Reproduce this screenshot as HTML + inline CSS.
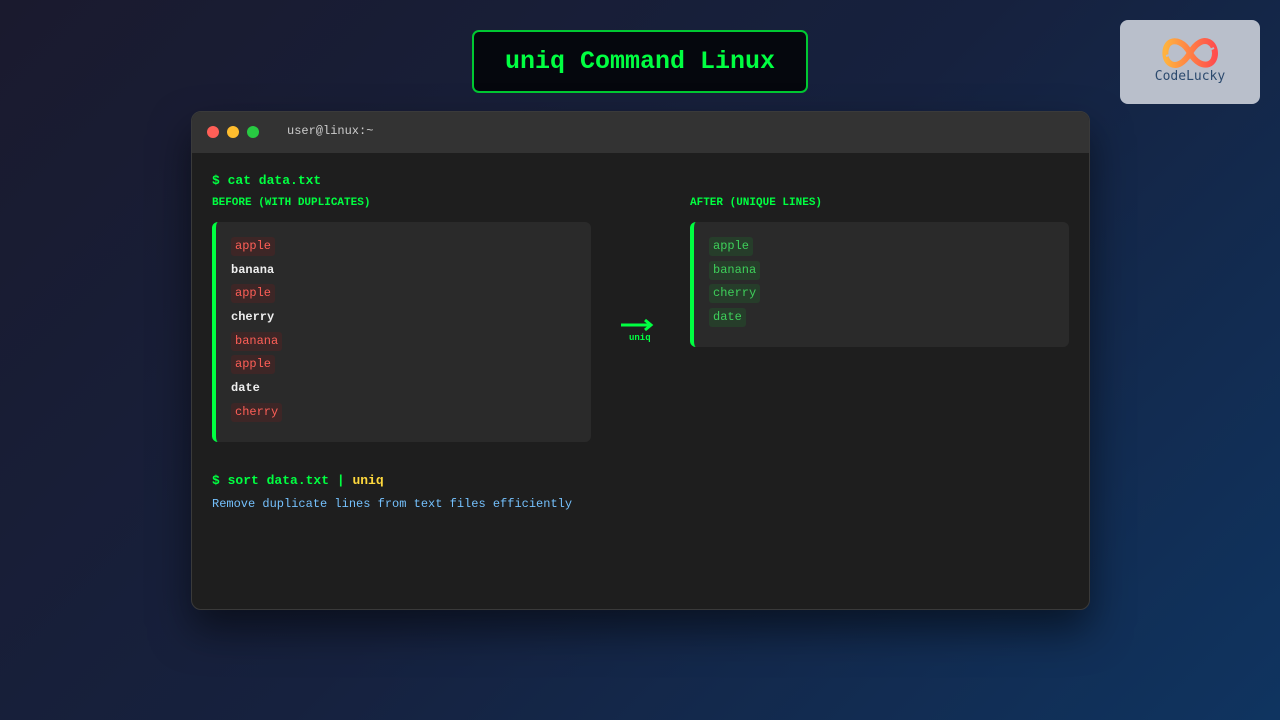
<!DOCTYPE html>
<html><head><style>
*{margin:0;padding:0;box-sizing:border-box}
body{width:1280px;height:720px;overflow:hidden;background:linear-gradient(135deg,#1a1a2e 0%,#16213e 50%,#0f3460 100%);font-family:"Courier New",Courier,"Nimbus Mono PS","Liberation Mono",monospace;position:relative}
.title{position:absolute;left:472px;top:30px;width:336px;height:63px;border:2px solid #00c832;border-radius:7px;background:#05070d;color:#00ff41;font-weight:bold;font-size:25px;display:flex;align-items:center;justify-content:center}
.logo{position:absolute;left:1120px;top:20px;width:140px;height:84px;border-radius:8px;background:#b9bfcb;text-align:center}
.logo .t{position:absolute;top:49px;width:100%;font-family:"DejaVu Sans Mono",monospace;font-size:13px;color:#2c4a6e}
.term{position:absolute;left:191px;top:111px;width:899px;height:499px;background:#1e1e1e;border-radius:10px;border:1px solid #3a3a3a;box-shadow:0 20px 40px rgba(0,0,0,.5);overflow:hidden}
.hdr{height:41px;background:#333;position:relative}
.dot{position:absolute;top:14px;width:12px;height:12px;border-radius:50%}
.hdr span{position:absolute;left:95px;top:12px;color:#ccc;font-size:12px}
.g{color:#00ff41;font-weight:bold}
.abs{position:absolute}
.box{position:absolute;background:#2a2a2a;border-left:4px solid #00ff41;border-radius:6px;padding:15px 0 0 15px}
.it{height:23.7px;font-size:12px;line-height:18px}
.it b{font-weight:normal;display:inline-block;padding:1px 4px;line-height:17px;border-radius:3px}
.r b{background:#3d2626;color:#ff5f57}
.w{color:#eee;font-weight:bold}
.gr b{background:#263d2a;color:#3ecf5a}
</style></head><body>
<div class="title">uniq Command Linux</div>
<div class="logo">
<svg class="abs" style="left:40px;top:16px" width="60" height="34" viewBox="0 0 60 34"><defs><linearGradient id="a" x1="0" x2="1"><stop offset="0" stop-color="#ffb23e"/><stop offset="1" stop-color="#ff4d4d"/></linearGradient></defs><path d="M30 17C24 6 16 4 11 6 4 9 3 24 11 28 17 31 24 27 30 17 36 7 43 3 49 6 57 10 57 25 49 28 43 30 36 27 30 17Z" fill="none" stroke="url(#a)" stroke-width="6"/><path d="M6 20L20 16M40 18L54 12" stroke="#b9bfcb" stroke-width="2"/></svg>
<div class="t">CodeLucky</div></div>
<div class="term">
<div class="hdr"><div class="dot" style="left:15px;background:#ff5f57"></div><div class="dot" style="left:35px;background:#ffbd2e"></div><div class="dot" style="left:55px;background:#28ca42"></div><span>user@linux:~</span></div>
<div class="abs g" style="left:20px;top:61px;font-size:13px">$ cat data.txt</div>
<div class="abs g" style="left:20px;top:85px;font-size:11px">BEFORE (WITH DUPLICATES)</div>
<div class="abs g" style="left:498px;top:85px;font-size:11px">AFTER (UNIQUE LINES)</div>
<div class="box" style="left:20px;top:110px;width:379px;height:220px">
<div class="it r"><b>apple</b></div><div class="it w">banana</div><div class="it r"><b>apple</b></div><div class="it w">cherry</div><div class="it r"><b>banana</b></div><div class="it r"><b>apple</b></div><div class="it w">date</div><div class="it r"><b>cherry</b></div>
</div>
<svg class="abs" style="left:428px;top:206px" width="34" height="14" viewBox="0 0 34 14"><path d="M1 7H30M25 2L31 7 25 12" fill="none" stroke="#00ff41" stroke-width="3"/></svg>
<div class="abs g" style="left:437px;top:221px;font-size:9px">uniq</div>
<div class="box" style="left:498px;top:110px;width:379px;height:125px">
<div class="it gr"><b>apple</b></div><div class="it gr"><b>banana</b></div><div class="it gr"><b>cherry</b></div><div class="it gr"><b>date</b></div>
</div>
<div class="abs g" style="left:20px;top:361px;font-size:13px">$ sort data.txt | <span style="color:#ffd93d">uniq</span></div>
<div class="abs" style="left:20px;top:385px;font-size:12px;color:#74c0fc">Remove duplicate lines from text files efficiently</div>
</div>
</body></html>
